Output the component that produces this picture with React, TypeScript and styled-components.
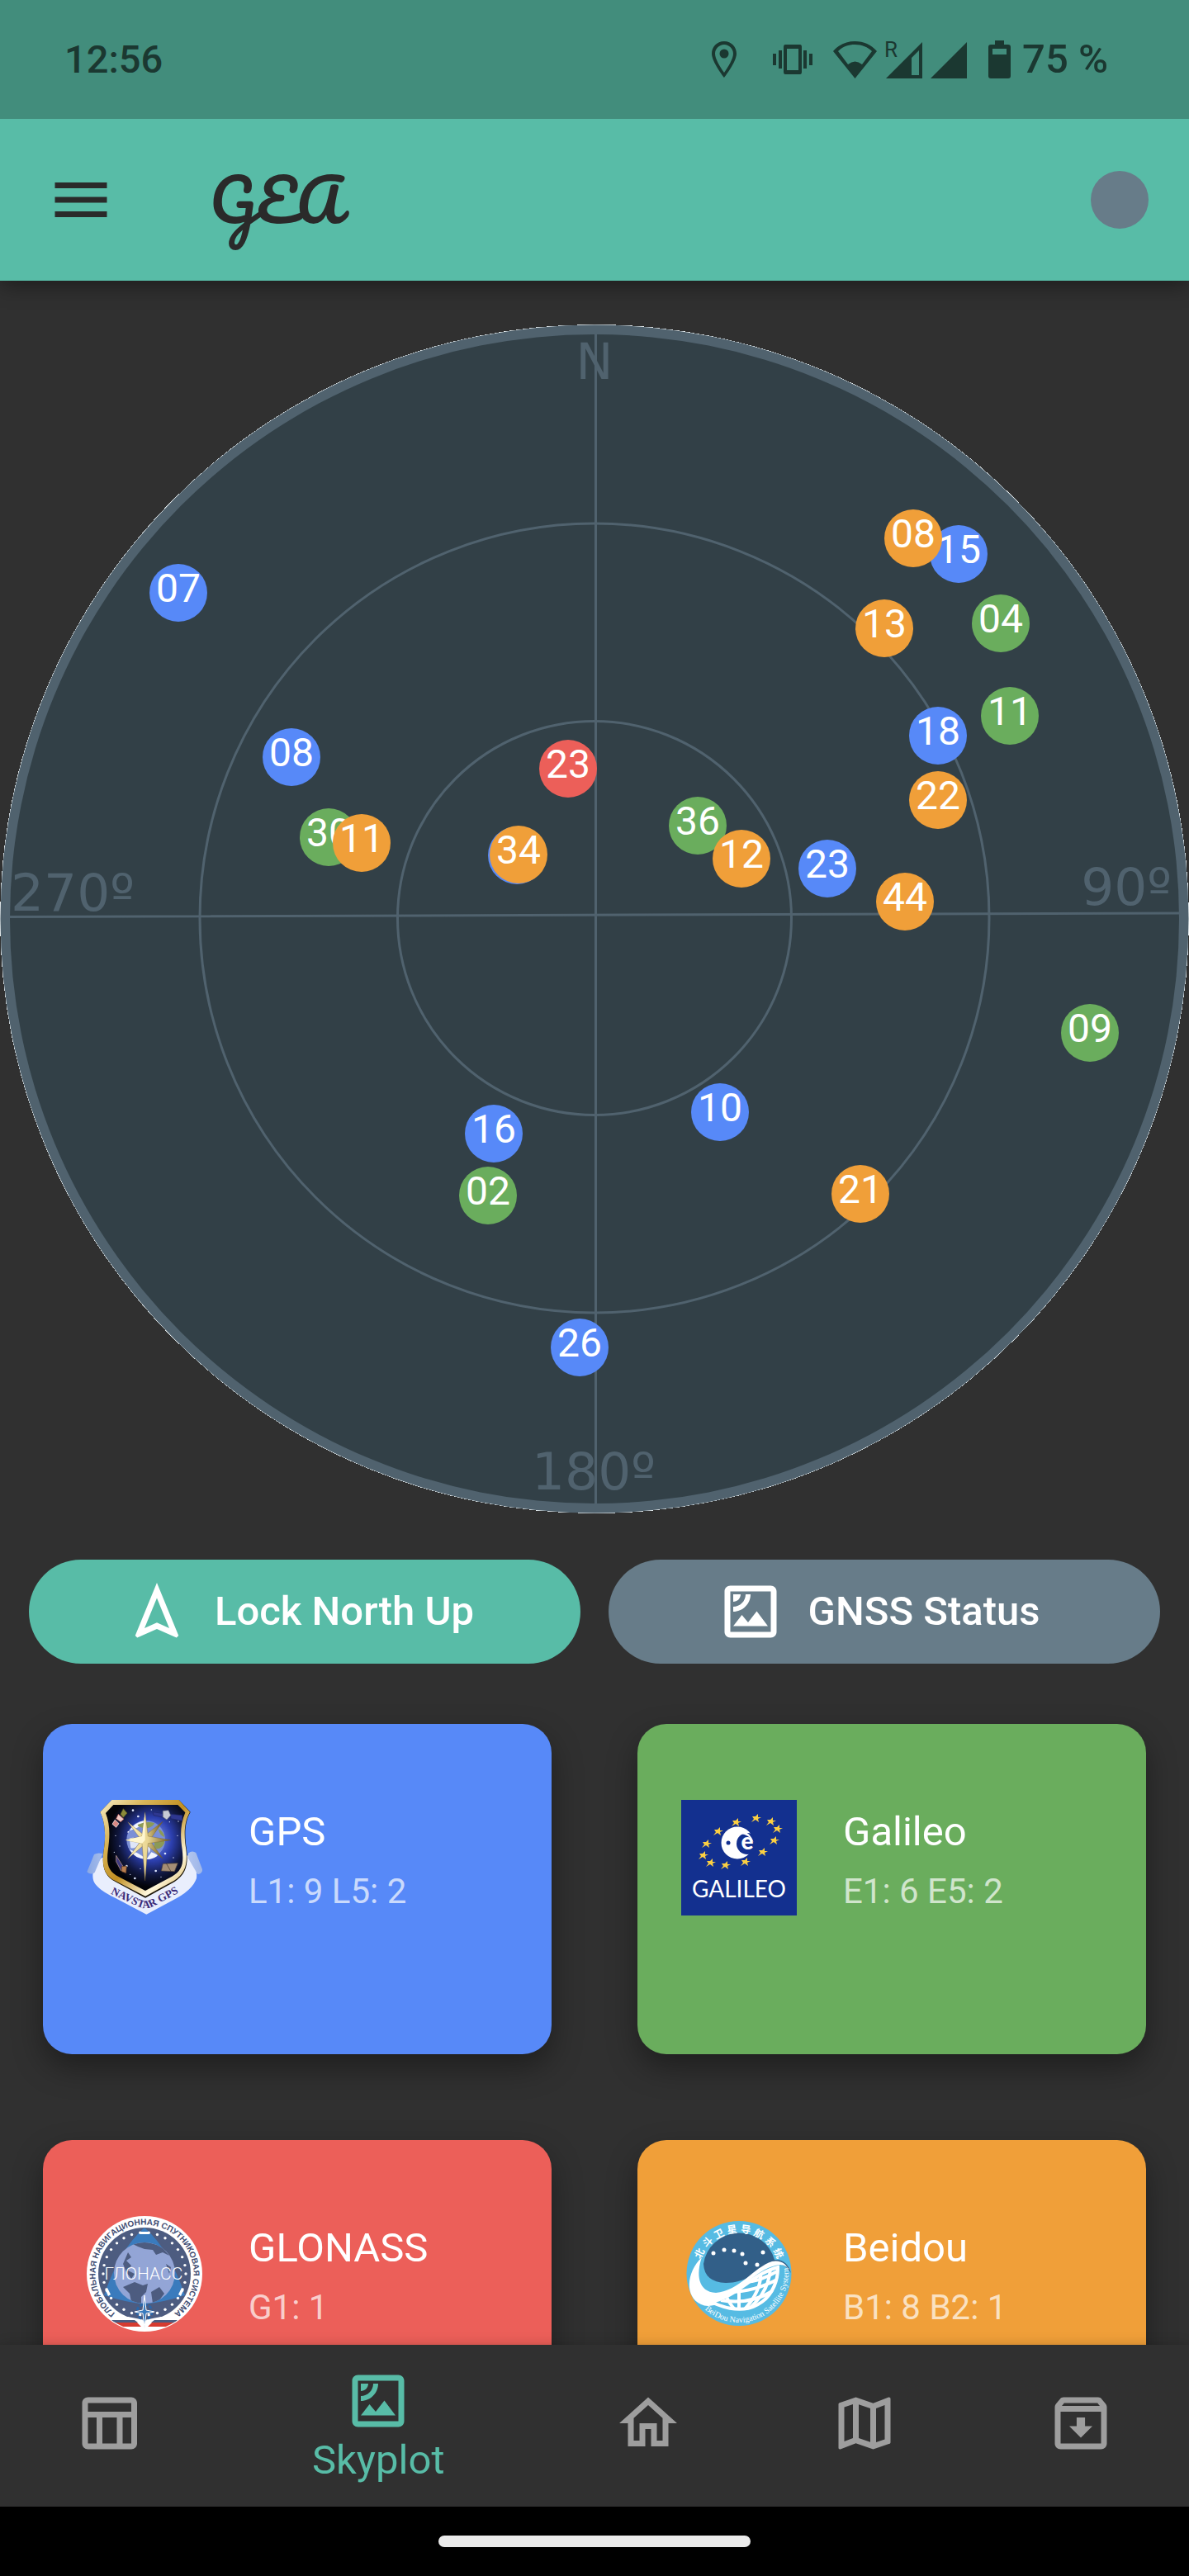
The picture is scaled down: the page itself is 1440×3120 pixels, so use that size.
import React, { useState } from "react";
import styled, { createGlobalStyle } from "styled-components";
import {
  MdMenu,
  MdOutlineArchive,
  MdOutlineHome,
  MdOutlineMap,
  MdOutlineNavigation,
  MdOutlineSatellite,
  MdOutlineTableChart,
} from "react-icons/md";

const color = {
  primary: "#58bca7",
  primaryDark: "#428d7c",
  statusInk: "#1b3831",
  surface: "#303030",
  ink: "#2a2a2a",
  slate: "#677c89",
  plot: "#324047",
  plotLine: "#50626e",
  gps: "#5789f8",
  galileo: "#6aad5d",
  glonass: "#ec5f59",
  beidou: "#f09f39",
  muted: "#9e9e9e",
};

const GlobalStyle = createGlobalStyle`
  * { box-sizing: border-box; }
  body {
    margin: 0;
    background: ${color.surface};
    font-family: Roboto, "Liberation Sans", sans-serif;
  }
`;

const Screen = styled.div`
  display: flex;
  flex-direction: column;
  height: 100vh;
  background: ${color.surface};
`;

const StatusBar = styled.div`
  position: relative;
  z-index: 2;
  display: flex;
  align-items: center;
  justify-content: space-between;
  flex: none;
  height: 144px;
  padding: 0 98px 0 78px;
  background: ${color.primaryDark};
  color: ${color.statusInk};
  font-size: 49px;
  font-weight: 500;
  line-height: 56px;
`;

const Clock = styled.time`
  font-size: 47px;
`;

const StatusIcons = styled.div<{ $gap: number }>`
  display: flex;
  align-items: center;
  gap: ${(p) => p.$gap}px;

  svg {
    display: block;
    fill: currentColor;
  }
`;

const AppBar = styled.header`
  position: relative;
  z-index: 1;
  display: flex;
  align-items: center;
  flex: none;
  height: 196px;
  padding: 0 49px 0 56px;
  background: ${color.primary};
  color: ${color.ink};
  box-shadow: 0 6px 24px rgba(0, 0, 0, 0.4);
`;

const IconButton = styled.button`
  display: flex;
  padding: 0;
  border: 0;
  background: none;
  color: inherit;
  font-size: 84px;
`;

const Brand = styled.h1`
  flex: 1;
  margin: 0 0 0 114px;
  font-family: Pacifico, Lato, sans-serif;
  font-size: 70px;
  font-weight: 400;
  line-height: 100px;
`;

const StatusLight = styled.button`
  width: 70px;
  height: 70px;
  padding: 0;
  border: 0;
  border-radius: 50%;
  background: ${color.slate};
`;

const Content = styled.main`
  flex: 1;
  min-height: 0;
  padding-top: 53px;
  overflow: auto;
  scrollbar-width: none;
`;

const Plot = styled.svg`
  display: block;
  width: 100%;
  height: auto;
`;

const Actions = styled.div`
  display: grid;
  grid-template-columns: 1fr 1fr;
  gap: 34px;
  padding: 56px 35px 0;
`;

const ActionButton = styled.button<{ $tone: string }>`
  display: flex;
  align-items: center;
  justify-content: center;
  gap: 28px;
  height: 126px;
  padding: 0 16px 0 0;
  border: 0;
  border-radius: 63px;
  background: ${(p) => p.$tone};
  color: #fff;
  font: 500 49px/56px Roboto, "Liberation Sans", sans-serif;

  svg {
    flex: none;
    font-size: 84px;
  }
`;

const Cards = styled.div`
  display: grid;
  grid-template-columns: 1fr 1fr;
  gap: 104px;
  padding: 73px 52px 104px;
`;

const Card = styled.section<{ $tone: string }>`
  display: flex;
  align-items: flex-start;
  gap: 56px;
  min-height: 400px;
  padding: 92px 53px;
  border-radius: 35px;
  background: ${(p) => p.$tone};
  box-shadow: 0 16px 36px rgba(0, 0, 0, 0.36);

  svg {
    flex: none;
    width: 140px;
    height: 140px;
  }
`;

const CardText = styled.div`
  padding-top: 3px;
  line-height: 72px;
`;

const CardTitle = styled.h2`
  margin: 0;
  color: #fff;
  font-size: 49px;
  font-weight: 400;
`;

const CardDetail = styled.p`
  margin: 0;
  color: rgba(255, 255, 255, 0.7);
  font-size: 42px;
`;

const BottomNav = styled.nav`
  position: relative;
  display: flex;
  flex: none;
  height: 196px;
  background: ${color.surface};
  box-shadow: 0 0 14px rgba(0, 0, 0, 0.2);
`;

const NavItem = styled.button<{ $active: boolean }>`
  display: flex;
  flex: ${(p) => (p.$active ? 3 : 2)} 1 0;
  flex-direction: column;
  align-items: center;
  justify-content: center;
  padding: 0 0 ${(p) => (p.$active ? 0 : 6)}px;
  border: 0;
  background: none;
  color: ${(p) => (p.$active ? color.primary : color.muted)};
  font: 400 49px/60px Roboto, "Liberation Sans", sans-serif;

  svg {
    font-size: 84px;
  }
`;

const GestureBar = styled.div`
  display: flex;
  align-items: center;
  justify-content: center;
  flex: none;
  height: 84px;
  background: #000;
`;

const Handle = styled.div`
  width: 378px;
  height: 14px;
  border-radius: 7px;
  background: #ebebeb;
`;

type Sat = [id: string, tone: string, x: number, y: number];

const satellites: Sat[] = [
  ["07", color.gps, 216, 325],
  ["08", color.gps, 353, 524],
  ["15", color.gps, 1161, 278],
  ["18", color.gps, 1136, 498],
  ["23", color.gps, 1002, 659],
  ["16", color.gps, 598, 980],
  ["10", color.gps, 872, 954],
  ["26", color.gps, 702, 1239],
  ["", color.gps, 626, 643],
  ["23", color.glonass, 688, 538],
  ["30", color.galileo, 398, 621],
  ["04", color.galileo, 1212, 362],
  ["11", color.galileo, 1223, 474],
  ["36", color.galileo, 845, 607],
  ["09", color.galileo, 1320, 858],
  ["02", color.galileo, 591, 1055],
  ["11", color.beidou, 438, 628],
  ["34", color.beidou, 628, 642],
  ["08", color.beidou, 1106, 259],
  ["13", color.beidou, 1071, 368],
  ["22", color.beidou, 1136, 576],
  ["12", color.beidou, 898, 647],
  ["44", color.beidou, 1096, 699],
  ["21", color.beidou, 1042, 1053],
];

function SkyPlot() {
  return (
    <Plot viewBox="0 0 1440 1440" role="img" aria-label="Skyplot">
      <circle cx="720" cy="720" r="720" fill="#e8eef0" shapeRendering="crispEdges" />
      <circle cx="720" cy="720" r="719.5" fill={color.plotLine} />
      <circle cx="720" cy="720" r="708" fill={color.plot} />
      <g fill="none" stroke={color.plotLine} strokeWidth="3">
        <circle cx="720" cy="719" r="478" />
        <circle cx="720" cy="719" r="238.5" />
        <path d="M721.5 8V1432M8 717.5L1432 713" />
      </g>
      <g fill={color.plotLine} fontFamily='"DejaVu Sans", Verdana, sans-serif' fontSize="63">
        <text x="720" y="66" textAnchor="middle" fontSize="60">N</text>
        <text x="13" y="710">270º</text>
        <text x="1419" y="703" textAnchor="end">90º</text>
        <text x="719" y="1411" textAnchor="middle">180º</text>
      </g>
      {satellites.map(([id, tone, x, y], i) => (
        <g key={i}>
          <circle cx={x} cy={y} r="35" fill={tone} />
          <text
            x={x}
            y={y + 11}
            fill="#fff"
            fontFamily="Roboto, sans-serif"
            fontSize="48"
            textAnchor="middle"
          >
            {id}
          </text>
        </g>
      ))}
    </Plot>
  );
}

function GpsLogo() {
  const dots = [[213, 98], [165, 228], [203, 331], [190, 300], [346, 140], [378, 138], [232, 120], [150, 190], [360, 270], [296, 318], [315, 340], [180, 110], [330, 255], [145, 250], [280, 96], [220, 345], [375, 190], [240, 310]];
  return (
    <svg viewBox="45 60 420 420" aria-hidden="true">
      <defs>
        <linearGradient id="gold" x1="0" y1="0" x2="1" y2="1">
          <stop offset="0" stopColor="#f7edc8" />
          <stop offset=".25" stopColor="#d9b65a" />
          <stop offset=".5" stopColor="#c18f22" />
          <stop offset=".75" stopColor="#fff8dd" />
          <stop offset="1" stopColor="#c99a30" />
        </linearGradient>
        <radialGradient id="space" cx=".58" cy=".4" r=".56">
          <stop offset="0" stopColor="#8ea8ff" />
          <stop offset=".45" stopColor="#2c3fae" />
          <stop offset=".75" stopColor="#10173f" />
          <stop offset="1" stopColor="#020308" />
        </radialGradient>
        <linearGradient id="ray" x1="0" x2="1">
          <stop offset="0" stopColor="#fff3be" />
          <stop offset=".5" stopColor="#e9d592" />
          <stop offset="1" stopColor="#6d5518" />
        </linearGradient>
        <linearGradient id="curl" x1="0" x2="1">
          <stop offset="0" stopColor="#8aa8e4" />
          <stop offset=".5" stopColor="#eff3ff" />
          <stop offset="1" stopColor="#9db5e8" />
        </linearGradient>
      </defs>
      <path d="M100 270C70 300 62 330 70 355Q82 385 150 417L262 476L372 417Q430 385 444 345C448 310 432 280 412 262Z" fill="#e9eefd" />
      <path d="M72 258Q86 250 103 256L74 324Q60 334 46 322ZM414 254Q428 242 442 252L466 315Q462 330 448 330L414 272Z" fill="url(#curl)" />
      <path d="M136 60H380L422 104C400 140 400 190 408 240C414 290 408 330 365 357L258 416L150 358C108 338 100 300 106 250C116 190 112 140 94 104Z" fill="#1a1406" />
      <path d="M136 60H380L420 104C398 140 398 190 406 240C412 290 404 328 363 353L258 410L150 355C108 335 100 300 106 250C116 190 112 140 94 104Z" fill="url(#gold)" />
      <path d="M142 78H376L403 106C384 150 385 195 392 240C398 290 393 316 355 338L258 390L162 340C124 320 116 295 122 245C130 190 130 150 114 108Z" fill="url(#space)" />
      <circle cx="260" cy="205" r="70" fill="#7b8fd6" />
      <path d="M196 180Q215 140 260 135Q240 160 212 168T196 180ZM200 240Q230 250 262 275Q220 275 200 240ZM280 250Q310 262 300 265Q275 280 262 275Z" fill="#f2f5ff" />
      <path d="M230 150Q265 135 292 145Q280 165 255 162T230 150ZM292 205Q325 195 328 215Q315 245 290 235ZM305 165Q325 175 328 195Q310 190 305 165Z" fill="#8c9a56" />
      <path d="M200 200Q225 190 235 215Q225 240 205 235ZM265 225Q285 235 270 255Z" fill="#dfe6f8" />
      {dots.map(([x, y], i) => (
        <circle key={i} cx={x} cy={y} r={i % 3 ? 2 : 4} fill="#dde6ff" />
      ))}
      <g strokeWidth="2">
        <path d="M178 92L192 108L178 124L168 112Z" fill="#8b8a3a" stroke="#5c5b1e" />
        <path d="M160 112L180 130L168 140L152 128Z" fill="#f0c9c4" stroke="#b04c44" />
        <path d="M148 132L162 146L152 160L138 148Z" fill="#d88883" stroke="#fff" />
        <path d="M285 104L325 110V124L288 116ZM350 112L392 116V136L350 128Z" fill="#2e3790" stroke="#1d2466" />
        <path d="M322 100L342 98L350 116L336 132L322 122Z" fill="#c7ccd6" stroke="#6c7280" />
        <path d="M152 262L176 300L170 318L152 284Z" fill="#3f3b80" stroke="#cfa58a" />
        <path d="M172 302L190 300L188 326L172 320Z" fill="#b87d4e" stroke="#5a3a20" />
        <path d="M322 292L376 290L364 320L316 318Z" fill="#a58e76" stroke="#4f4133" />
        <path d="M334 290L352 322" stroke="#3a2f25" />
      </g>
      <path d="M194 140L256 190L322 138L274 206L322 274L258 220L194 274L244 206Z" fill="url(#ray)" stroke="#6b5520" />
      <path d="M257 104L268 192L350 206L268 218L257 354L246 218L186 206L246 192Z" fill="url(#ray)" stroke="#6b5520" />
      <path d="M257 104V206L246 218L186 206L246 192Z" fill="#fff6cf" />
      <path id="navstar" d="M98 385L225 444Q258 462 292 444L412 380" fill="none" />
      <text fill="#3b2a78" fontFamily='"Liberation Serif", serif' fontSize="40" fontWeight="700">
        <textPath href="#navstar" startOffset="50%" textAnchor="middle">NAVSTAR GPS</textPath>
      </text>
    </svg>
  );
}

function GalileoLogo() {
  const stars = [[67, 27], [91, 22], [109, 26], [117, 35], [113, 49], [99, 63], [78, 75], [54, 79], [36, 76], [27, 67], [31, 53], [45, 38]];
  return (
    <svg viewBox="0 0 140 140" aria-hidden="true">
      <rect width="140" height="140" fill="#13308f" />
      {stars.map(([x, y], i) => (
        <path
          key={i}
          transform={`translate(${x} ${y})`}
          d="M2 -5L2 -1L6 -1L2 1L3 5L-1 2L-6 5L-3 1L-5 -2L-1 -2Z"
          fill="#fbcf42"
        />
      ))}
      <circle cx="68" cy="52" r="19.5" fill="#fff" />
      <circle cx="80" cy="53" r="13" fill="#13308f" />
      <path d="M80 33A20 20 0 0 1 87.500 52H91V33Z" fill="#13308f" />
      <path d="M74 37Q84 40 87.500 51Q82 42 72 41Z" fill="#fff" />
      <circle cx="57" cy="52" r="2.500" fill="#13308f" />
      <text x="80" y="60" fill="#fff" fontFamily="Lato, sans-serif" fontSize="28" fontWeight="900" textAnchor="middle">e</text>
      <text x="70" y="118" fill="#fff" fontFamily="Lato, sans-serif" fontSize="28" textAnchor="middle">GALILEO</text>
    </svg>
  );
}

function GlonassLogo() {
  const stars = Array.from({ length: 30 }, (_, i) => (i * 12 + 6) * (Math.PI / 180));
  return (
    <svg viewBox="0 0 140 140" aria-hidden="true">
      <defs>
        <clipPath id="glonass-disc"><circle cx="70" cy="70" r="69" /></clipPath>
        <clipPath id="glonass-globe"><circle cx="70" cy="69" r="37" /></clipPath>
      </defs>
      <circle cx="70" cy="70" r="70" fill="#fff" />
      <circle cx="70" cy="70" r="56" fill="#4d5c80" />
      <path d="M70 14Q100 40 119 96Q94 104 70 107Q46 104 21 96Q40 40 70 14Z" fill="#3a7bbd" />
      {stars.map((a, i) => (
        <circle key={i} cx={70 + 50 * Math.sin(a)} cy={70 - 50 * Math.cos(a)} r="1.700" fill="#fff" />
      ))}
      <circle cx="70" cy="69" r="37" fill="#93a5d6" />
      <g clipPath="url(#glonass-globe)" fill="#4d5c80">
        <path d="M56 34L70 31L90 36L100 48L92 44L84 47L80 41L70 40L62 37Z" />
        <path d="M50 44L54 50L48 54L54 60L50 66L58 70L54 76L48 68L44 58Z" />
        <path d="M44 86L58 80L68 84L74 82L72 92L66 98L66 110L54 104L52 94Z" />
        <path d="M78 92L88 86L94 94L88 102L80 106Z" />
        <path d="M96 58L102 62L100 70Z" />
      </g>
      <g fill="#fff">
        <path d="M65 19H75V22H65ZM22 88L25 87L29 95L26 97ZM111 95L115 87L118 88L114 97Z" />
      </g>
      <g clipPath="url(#glonass-disc)">
        <path d="M0 122H50L70 126L90 122H140V140H0Z" fill="#fff" />
        <path d="M30 126H58L62 129H28ZM82 126H110L112 129H78Z" fill="#4d5c80" />
        <path d="M30 129H61L66 134H36ZM79 129H110L104 134H74Z" fill="#d63b30" />
      </g>
      <circle cx="70" cy="116" r="9" fill="none" stroke="#2a66a8" strokeWidth="3" strokeDasharray="4 2" />
      <path d="M70 96L72 114L82 116L72 118L70 136L68 118L58 116L68 114Z" fill="#3a7bbd" stroke="#fff" />
      <text x="69" y="77" fill="#fff" fontFamily="Roboto, sans-serif" fontSize="21" fontWeight="300" textAnchor="middle">ГЛОНАСС</text>
      <path id="glonass-ring" d="M33.500 117A59.500 59.500 0 1 1 106.500 117" fill="none" />
      <text fill="#3f4d72" fontFamily='"Liberation Sans", sans-serif' fontSize="10" fontWeight="700">
        <textPath href="#glonass-ring" startOffset="50%" textAnchor="middle">
          ГЛОБАЛЬНАЯ НАВИГАЦИОННАЯ СПУТНИКОВАЯ СИСТЕМА
        </textPath>
      </text>
    </svg>
  );
}

function BeidouLogo() {
  const dots = [[39, 45], [52, 41], [64, 42], [74, 46], [78, 57], [92, 59], [99, 44]];
  return (
    <svg viewBox="0 0 140 140" aria-hidden="true">
      <defs>
        <clipPath id="beidou-globe">
          <path d="M36 106C68 100 86 70 117 63C120 96 92 130 36 106Z" />
        </clipPath>
      </defs>
      <circle cx="70" cy="69.500" r="63.500" fill="#56bbe3" />
      <path d="M27 58A44 44 0 0 1 113 53Q128 52 133 69Q124 54 110 60C90 68 78 81 54 81Q28 80 27 58Z" fill="#325f88" />
      <path d="M25 50C6 68 4 98 24 107Q34 112 50 104C74 90 92 62 120 59Q129 59 132 69Q126 52 110 55C88 62 70 91 42 93C20 92 18 70 25 50Z" fill="#fff" />
      <path d="M36 104C68 98 86 70 117 62C118 92 92 130 36 104Z" fill="#56bbe3" stroke="#fff" strokeWidth="4" />
      <g clipPath="url(#beidou-globe)" fill="none" stroke="#fff" strokeWidth="4">
        <path d="M70 80V120M96 66C98 84 88 102 72 118M108 64C106 90 92 104 76 118M54 96Q60 110 70 118" />
        <path d="M58 92Q88 92 118 76M48 102Q84 108 112 90M70 80Q92 82 118 66" />
      </g>
      {dots.map(([x, y], i) => (
        <circle key={i} cx={x} cy={y} r="2.500" fill="#fff" />
      ))}
      <g fill="#fff" fontFamily='"Noto Sans CJK SC", sans-serif' fontSize="12" fontWeight="700" textAnchor="middle">
        {Array.from("北斗卫星导航系统").map((ch, i) => (
          <text key={ch} x="70" y="20" transform={`rotate(${i * 18 - 63} 70 69.500)`}>{ch}</text>
        ))}
      </g>
      <path id="beidou-ring" d="M31 115A60.500 60.500 0 0 0 130 66" fill="none" />
      <text fill="#fff" fontFamily='"Liberation Serif", serif' fontSize="10">
        <textPath href="#beidou-ring" startOffset="50%" textAnchor="middle">BeiDou Navigation Satellite System</textPath>
      </text>
    </svg>
  );
}

const systems = [
  { name: "GPS", detail: "L1: 9 L5: 2", tone: color.gps, Logo: GpsLogo },
  { name: "Galileo", detail: "E1: 6 E5: 2", tone: color.galileo, Logo: GalileoLogo },
  { name: "GLONASS", detail: "G1: 1", tone: color.glonass, Logo: GlonassLogo },
  { name: "Beidou", detail: "B1: 8 B2: 1", tone: color.beidou, Logo: BeidouLogo },
];

const tabs = [
  { name: "Table", Icon: MdOutlineTableChart },
  { name: "Skyplot", Icon: MdOutlineSatellite },
  { name: "Home", Icon: MdOutlineHome },
  { name: "Map", Icon: MdOutlineMap },
  { name: "Archive", Icon: MdOutlineArchive },
];

export default function App() {
  const [active, setActive] = useState("Skyplot");
  return (
    <>
      <GlobalStyle />
      <Screen>
        <StatusBar>
          <Clock>12:56</Clock>
          <StatusIcons $gap={25}>
            <StatusIcons $gap={44}>
              <svg width="30" height="46" viewBox="0 0 30 46">
                <path fillRule="evenodd" d="M15 1C6 1 0 8 0 16C0 26 15 45 15 45S30 26 30 16C30 8 24 1 15 1ZM15 5C21 5 26 10 26 16C26 22 20 32 15 39C10 32 4 22 4 16C4 10 9 5 15 5Z" />
                <circle cx="15" cy="16" r="5.500" />
              </svg>
              <svg width="48" height="36" viewBox="0 0 48 36">
                <path fillRule="evenodd" d="M15 0H33Q35 0 35 3V33Q35 36 33 36H15Q13 36 13 33V3Q13 0 15 0ZM17 5V31H31V5ZM7 7H11V29H7ZM37 7H41V29H37ZM0 11H4V25H0ZM44 11H48V25H44Z" />
              </svg>
            </StatusIcons>
            <StatusIcons $gap={9}>
              <svg width="53" height="46" viewBox="0 0 53 46">
                <path fillRule="evenodd" d="M26.500 1C16 1 7 5 0 13L26.500 46L53 13C46 5 37 1 26.500 1ZM26.500 5C35 5 42 8 47 13L35 29Q26.500 22 18 29L6 13C11 8 18 5 26.500 5Z" />
              </svg>
              <svg width="47" height="60" viewBox="0 -6 47 60">
                <text x="0" y="21" fontFamily="Roboto, sans-serif" fontSize="26" fontWeight="400">R</text>
                <path fillRule="evenodd" d="M2 47L46 3V47ZM33 22V43H42V13Z" />
              </svg>
              <svg width="45" height="48" viewBox="0 0 45 48">
                <path d="M0 47L44 3V47Z" />
              </svg>
            </StatusIcons>
            <StatusIcons $gap={14}>
              <svg width="27" height="46" viewBox="0 0 27 46">
                <path fillRule="evenodd" d="M8 0H19V5H24Q27 5 27 8V43Q27 46 24 46H3Q0 46 0 43V8Q0 5 3 5H8ZM5 10V17H22V10Z" />
              </svg>
              <span>75 %</span>
            </StatusIcons>
          </StatusIcons>
        </StatusBar>
        <AppBar>
          <IconButton aria-label="Open menu"><MdMenu /></IconButton>
          <Brand>GEA</Brand>
          <StatusLight aria-label="Fix status" />
        </AppBar>
        <Content>
          <SkyPlot />
          <Actions>
            <ActionButton $tone={color.primary}><MdOutlineNavigation />Lock North Up</ActionButton>
            <ActionButton $tone={color.slate}><MdOutlineSatellite />GNSS Status</ActionButton>
          </Actions>
          <Cards>
            {systems.map(({ name, detail, tone, Logo }) => (
              <Card key={name} $tone={tone}>
                <Logo />
                <CardText>
                  <CardTitle>{name}</CardTitle>
                  <CardDetail>{detail}</CardDetail>
                </CardText>
              </Card>
            ))}
          </Cards>
        </Content>
        <BottomNav>
          {tabs.map(({ name, Icon }) => (
            <NavItem
              key={name}
              $active={name === active}
              aria-label={name}
              onClick={() => setActive(name)}
            >
              <Icon />
              {name === active && <span>{name}</span>}
            </NavItem>
          ))}
        </BottomNav>
        <GestureBar><Handle /></GestureBar>
      </Screen>
    </>
  );
}
